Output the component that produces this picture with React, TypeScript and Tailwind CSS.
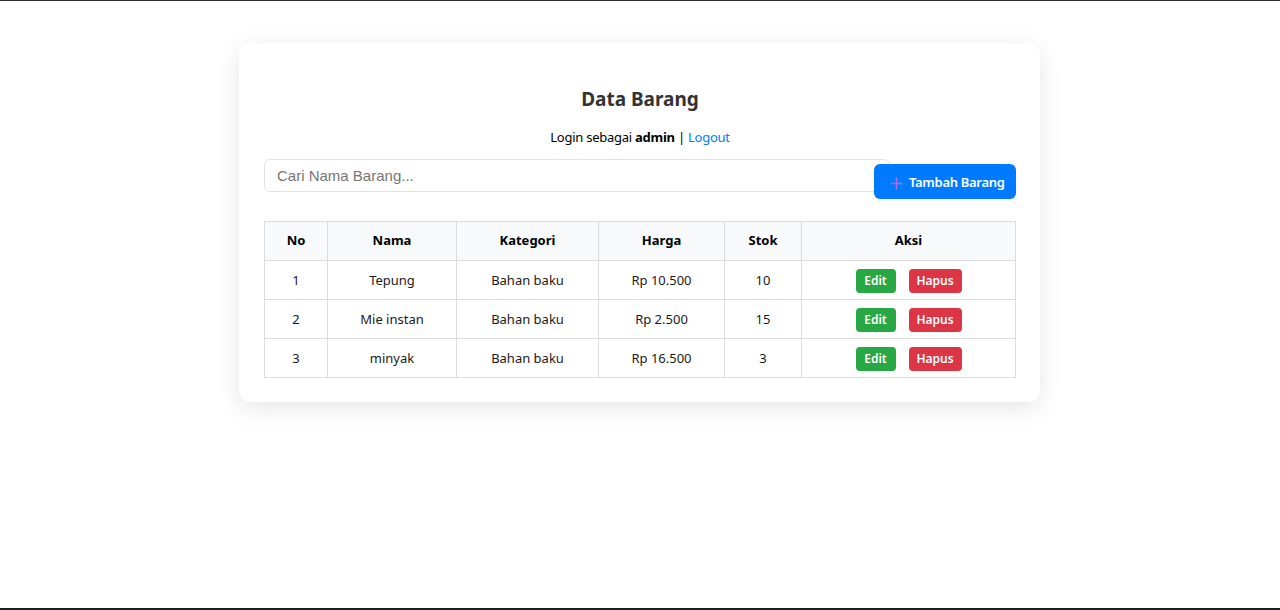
import React from "react";

const rows = [
  { no: 1, nama: "Tepung", kategori: "Bahan baku", harga: "Rp 10.500", stok: 10 },
  { no: 2, nama: "Mie instan", kategori: "Bahan baku", harga: "Rp 2.500", stok: 15 },
  { no: 3, nama: "minyak", kategori: "Bahan baku", harga: "Rp 16.500", stok: 3 },
];

const font = { fontFamily: '"Noto Sans", "Open Sans", sans-serif' };

export default function App() {
  return (
    <div
      className="flex h-[610px] w-full justify-center overflow-hidden border-t border-b-2 border-t-[#2b2f33] border-b-[#1e1e1e] bg-white pr-[1px]"
      style={font}
    >
      <div className="mt-[42px] h-fit w-[801px] rounded-[12px] bg-white pl-[25px] pr-[24px] pt-[44px] pb-[24px] shadow-[0_6px_24px_rgba(0,0,0,0.10)]">
        <h2 className="text-center text-[19px] font-bold leading-[24px] text-[#333333]">Data Barang</h2>
        <p className="mt-[16px] text-center text-[13px] leading-[20px] tracking-[-0.25px] text-black">
          Login sebagai <b>admin</b> | <a className="text-[#007bff]">Logout</a>
        </p>
        <div className="mt-[12px] flex items-start">
          <input
            className="h-[33px] w-[626px] shrink-0 rounded-[6px] border border-[#e3e3e3] px-[12px] text-[15px] outline-none placeholder:text-[#757575]"
            style={{ fontFamily: '"Liberation Sans", Arial, sans-serif' }}
            placeholder="Cari Nama Barang..."
          />
          <button className="relative ml-[-16px] mt-[5px] flex h-[35px] w-[142px] shrink-0 items-center gap-[6px] rounded-[6px] bg-[#007bff] pt-[3px] pl-[16px] text-[13px] font-semibold tracking-[-0.3px] text-white">
            <svg width="13" height="13" viewBox="0 0 13 13">
              <path d="M6.5 0.5v12M0.5 6.5h12" stroke="#b46ad6" strokeWidth="1.6" />
            </svg>
            Tambah Barang
          </button>
        </div>
        <table className="mt-[22px] w-[752px] border-collapse border border-[#cfcfcf] text-[13px]">
          <thead>
            <tr className="h-[39px] bg-[#f8f9fa]">
              <th className="w-[63px] border border-[#dcdcdc] font-bold">No</th>
              <th className="w-[129px] border border-[#dcdcdc] font-bold">Nama</th>
              <th className="w-[142px] border border-[#dcdcdc] font-bold">Kategori</th>
              <th className="w-[126px] border border-[#dcdcdc] font-bold">Harga</th>
              <th className="w-[77px] border border-[#dcdcdc] font-bold">Stok</th>
              <th className="border border-[#dcdcdc] font-bold">Aksi</th>
            </tr>
          </thead>
          <tbody>
            {rows.map((r) => (
              <tr key={r.no} className="h-[39px] text-center text-[#1a1a1a]">
                <td className="border border-[#dcdcdc] pt-[1px]">{r.no}</td>
                <td className="border border-[#dcdcdc] pt-[1px]">{r.nama}</td>
                <td className="border border-[#dcdcdc] pt-[1px]">{r.kategori}</td>
                <td className="border border-[#dcdcdc] pt-[1px]">{r.harga}</td>
                <td className="border border-[#dcdcdc] pt-[1px]">{r.stok}</td>
                <td className="border border-[#dcdcdc] pt-[1px]">
                  <div className="flex items-center justify-center gap-[13px]">
                    <button className="h-[24px] w-[40px] rounded-[4px] bg-[#28a745] text-[12px] font-semibold text-white">
                      Edit
                    </button>
                    <button className="h-[24px] w-[53px] rounded-[4px] bg-[#dc3545] text-[12px] font-semibold text-white">
                      Hapus
                    </button>
                  </div>
                </td>
              </tr>
            ))}
          </tbody>
        </table>
      </div>
    </div>
  );
}
